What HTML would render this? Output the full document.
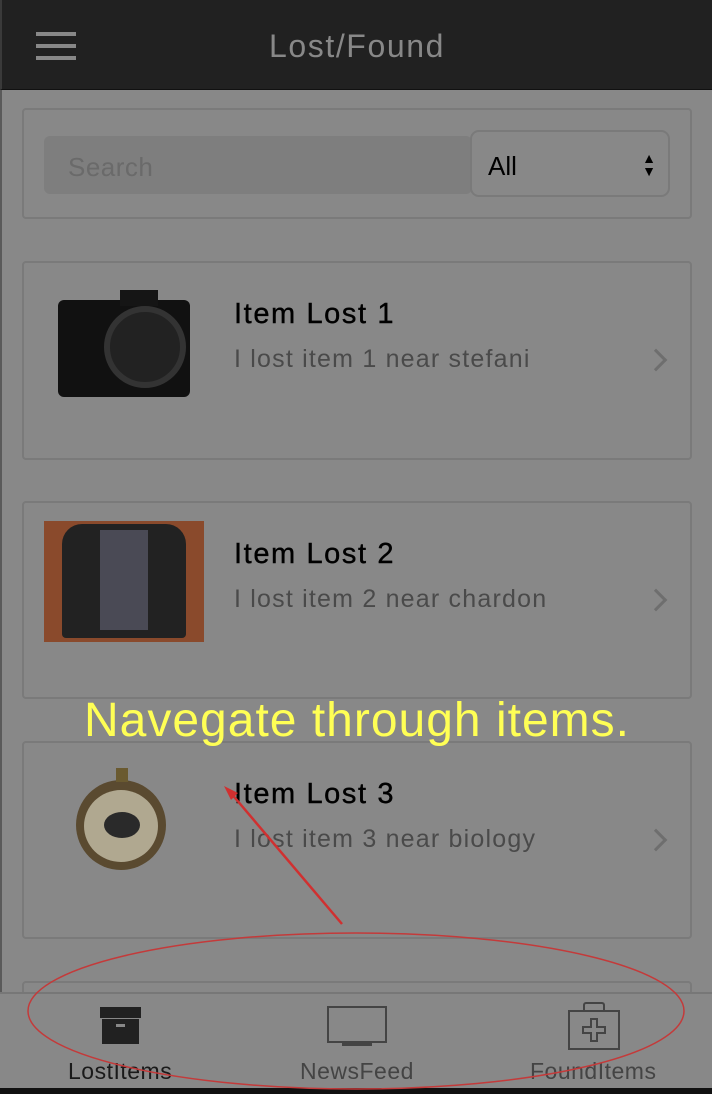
<!DOCTYPE html>
<html><head><meta charset="utf-8"><style>
*{margin:0;padding:0;box-sizing:border-box}
body{width:712px;height:1094px;background:#888;position:relative;overflow:hidden;font-family:"Liberation Sans",sans-serif}
.hdr{position:absolute;left:0;top:0;width:712px;height:90px;background:#212121;border-bottom:1px solid #111;border-left:2px solid #3a3a3a}
.hdr .t{position:absolute;left:0;right:0;top:28px;text-align:center;color:#888;font-size:32px;letter-spacing:1.6px}
.bar{position:absolute;left:34px;width:40px;height:4px;background:#888}
.card{position:absolute;left:22px;width:670px;border:2px solid #7a7a7a;border-radius:4px}
.srch{position:absolute;left:44px;top:136px;width:428px;height:58px;background:#7e7e7e;border-radius:6px;color:#6a6a6a;font-size:26px;padding:16px 24px;letter-spacing:.5px}
.sel{position:absolute;left:470px;top:130px;width:200px;height:67px;border:2px solid #7a7a7a;border-radius:9px;font-size:26px;color:#000;padding:19px 16px}
.ti{position:absolute;left:234px;font-size:29px;color:#000;letter-spacing:1.6px;-webkit-text-stroke:.4px #000}
.ds{position:absolute;left:234px;font-size:25px;color:#4a4a4a;letter-spacing:1.2px}
.chev{position:absolute;left:650px;width:16px;height:16px;border-right:3px solid #6e6e6e;border-top:3px solid #6e6e6e;transform:rotate(45deg)}
.tab{position:absolute;top:992px;left:0;width:712px;height:96px;border-top:2px solid #777;background:#888}
.lbl{position:absolute;top:1058px;font-size:23px;color:#444;letter-spacing:.5px}
</style></head><body>
<div class="hdr"><div class="bar" style="top:32px"></div><div class="bar" style="top:44px"></div><div class="bar" style="top:56px"></div><div class="t">Lost/Found</div></div>
<div style="position:absolute;left:0;top:90px;width:2px;height:1000px;background:#5a5a5a"></div>
<div class="card" style="top:108px;height:111px"></div>
<div class="srch">Search</div>
<div class="sel">All<span style="position:absolute;right:12px;top:20px;font-size:14px;line-height:13px;color:#000">▲<br>▼</span></div>

<div class="card" style="top:261px;height:199px"></div>
<div style="position:absolute;left:58px;top:300px;width:132px;height:97px;background:#111;border-radius:6px"></div>
<div style="position:absolute;left:104px;top:306px;width:82px;height:82px;border-radius:50%;background:#222;border:6px solid #333"></div>
<div style="position:absolute;left:120px;top:290px;width:38px;height:16px;background:#151515"></div>
<div class="ti" style="top:298px">Item Lost 1</div><div class="ds" style="top:345px">I lost item 1 near stefani</div><div class="chev" style="top:352px;left:648px"></div>

<div class="card" style="top:501px;height:198px"></div>
<div style="position:absolute;left:44px;top:521px;width:160px;height:121px;background:#8a4a2c"></div>
<div style="position:absolute;left:62px;top:524px;width:124px;height:114px;background:#222;border-radius:20px 20px 4px 4px"></div>
<div style="position:absolute;left:100px;top:530px;width:48px;height:100px;background:#4a4a55"></div>
<div class="ti" style="top:538px">Item Lost 2</div><div class="ds" style="top:585px">I lost item 2 near chardon</div><div class="chev" style="top:592px;left:648px"></div>

<div class="card" style="top:741px;height:198px"></div>
<div style="position:absolute;left:76px;top:780px;width:90px;height:90px;border-radius:50%;background:#5a4a30"></div>
<div style="position:absolute;left:84px;top:790px;width:74px;height:72px;border-radius:50%;background:#b0a890"></div>
<div style="position:absolute;left:104px;top:812px;width:36px;height:26px;border-radius:50%;background:#2a2a2a"></div>
<div style="position:absolute;left:116px;top:768px;width:12px;height:14px;background:#6a5a30"></div>
<div class="ti" style="top:778px">Item Lost 3</div><div class="ds" style="top:825px">I lost item 3 near biology</div><div class="chev" style="top:832px;left:648px"></div>

<div class="card" style="top:981px;height:40px"></div>
<div style="position:absolute;left:84px;top:693px;font-size:48px;letter-spacing:1px;color:#ffff55">Navegate through items.</div>

<div class="tab"></div>
<div style="position:absolute;left:100px;top:1007px;width:41px;height:11px;background:#212121"></div>
<div style="position:absolute;left:102px;top:1019px;width:37px;height:25px;background:#212121"></div>
<div style="position:absolute;left:116px;top:1024px;width:9px;height:3px;background:#888"></div>
<div style="position:absolute;left:327px;top:1006px;width:60px;height:37px;border:2px solid #444"></div>
<div style="position:absolute;left:342px;top:1042px;width:30px;height:4px;background:#444"></div>
<div style="position:absolute;left:568px;top:1010px;width:52px;height:40px;border:2px solid #444"></div>
<div style="position:absolute;left:583px;top:1002px;width:22px;height:10px;border:2px solid #444;border-bottom:none;border-radius:3px 3px 0 0"></div>
<div style="position:absolute;left:590px;top:1018px;width:8px;height:24px;border:2px solid #444"></div>
<div style="position:absolute;left:582px;top:1026px;width:24px;height:8px;border:2px solid #444"></div>
<div style="position:absolute;left:592px;top:1020px;width:4px;height:20px;background:#888"></div>
<div style="position:absolute;left:584px;top:1028px;width:20px;height:4px;background:#888"></div>
<div class="lbl" style="left:68px;color:#1a1a1a">LostItems</div>
<div class="lbl" style="left:300px">NewsFeed</div>
<div class="lbl" style="left:530px">FoundItems</div>
<div style="position:absolute;left:0;top:1088px;width:712px;height:6px;background:#111"></div>

<svg style="position:absolute;left:0;top:0" width="712" height="1094">
<ellipse cx="356" cy="1011" rx="328" ry="78" fill="none" stroke="#c43a3a" stroke-width="1.5"/>
<line x1="342" y1="924" x2="230" y2="792" stroke="#d03030" stroke-width="2.5"/>
<polygon points="224,786 238,793 231,800" fill="#d03030"/>
</svg>
</body></html>
